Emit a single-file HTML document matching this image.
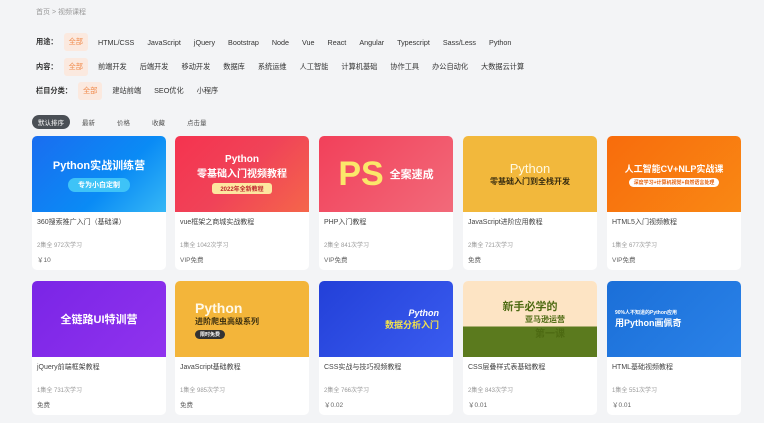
<!DOCTYPE html>
<html><head><meta charset="utf-8"><style>
*{margin:0;padding:0;box-sizing:border-box}
body{width:764px;height:423px;background:#f3f4f6;font-family:"Liberation Sans","Noto Sans CJK SC",sans-serif;color:#333;position:relative;overflow:hidden;font-size:8px}
.crumb{position:absolute;left:36px;top:7px;color:#999;font-size:7px}
.row{position:absolute;left:36px;display:flex;align-items:center;font-size:7.2px;color:#333}
.row b{font-weight:bold;margin-right:6px}
.row span{margin-right:13px}
.row .on{background:#fbe9df;color:#f08a4b;padding:4px 5px;border-radius:3px;margin-right:10px}
.sort{position:absolute;left:32px;top:115px;display:flex;align-items:center;font-size:6.5px;color:#555}
.sort span{margin-right:22px}
.sort .act{background:#4a4f55;color:#fff;padding:2px 6px;border-radius:7px;margin-right:12px}
.card{position:absolute;width:134px;height:134px;background:#fff;border-radius:5px;overflow:hidden}
.img{height:76px;position:relative;display:flex;flex-direction:column;align-items:center;justify-content:center;color:#fff;font-weight:bold;text-align:center}
.t{position:absolute;left:5px;top:81px;font-size:7px;color:#444}
.m{position:absolute;left:5px;top:104px;font-size:6px;color:#999}
.p{position:absolute;left:5px;top:118px;font-size:6.5px;color:#666}
</style></head><body>
<div class="crumb">首页 &gt; 视频课程</div>
<div class="row" style="top:33px"><b>用途：</b><span class="on">全部</span><span>HTML/CSS</span><span>JavaScript</span><span>jQuery</span><span>Bootstrap</span><span>Node</span><span>Vue</span><span>React</span><span>Angular</span><span>Typescript</span><span>Sass/Less</span><span>Python</span></div>
<div class="row" style="top:58px"><b>内容：</b><span class="on">全部</span><span>前端开发</span><span>后端开发</span><span>移动开发</span><span>数据库</span><span>系统运维</span><span>人工智能</span><span>计算机基础</span><span>协作工具</span><span>办公自动化</span><span>大数据云计算</span></div>
<div class="row" style="top:82px"><b>栏目分类：</b><span class="on">全部</span><span>建站前端</span><span>SEO优化</span><span>小程序</span></div>
<div class="sort"><span class="act">默认排序</span><span>最新</span><span>价格</span><span>收藏</span><span>点击量</span></div>

<div class="card" style="left:32px;top:136px"><div class="img" style="background:linear-gradient(135deg,#1a6df0,#0a8bf5 60%,#36b8f5)"><div style="font-size:11px">Python实战训练营</div><div style="margin-top:5px;background:#3ec3f7;border-radius:8px;padding:2px 10px;font-size:7px">专为小白定制</div></div><div class="t">360搜索推广入门（基础课）</div><div class="m">2集全 972次学习</div><div class="p">￥10</div></div>
<div class="card" style="left:175px;top:136px"><div class="img" style="background:linear-gradient(135deg,#f5334f,#f04358 50%,#f5664a)"><div style="font-size:10px">Python</div><div style="font-size:10px">零基础入门视频教程</div><div style="margin-top:3px;background:#fde7a0;color:#c0282f;border-radius:3px;padding:1px 8px;font-size:6px">2022年全新教程</div></div><div class="t">vue框架之商城实战教程</div><div class="m">1集全 1042次学习</div><div class="p">VIP免费</div></div>
<div class="card" style="left:319px;top:136px"><div class="img" style="background:linear-gradient(135deg,#f2405a,#f26a7a);flex-direction:row"><div style="font-size:34px;color:#fbe86a">PS</div><div style="font-size:11px;margin-left:6px">全案速成</div></div><div class="t">PHP入门教程</div><div class="m">2集全 841次学习</div><div class="p">VIP免费</div></div>
<div class="card" style="left:463px;top:136px"><div class="img" style="background:#f2b83c"><div style="font-size:13px;color:#fff8e0;font-weight:normal">Python</div><div style="font-size:8px;color:#3a2e10">零基础入门到全栈开发</div></div><div class="t">JavaScript进阶应用教程</div><div class="m">2集全 721次学习</div><div class="p">免费</div></div>
<div class="card" style="left:607px;top:136px"><div class="img" style="background:linear-gradient(135deg,#f86c0c,#f98814)"><div style="font-size:9px">人工智能CV+NLP实战课</div><div style="margin-top:3px;background:#fff;color:#e4600a;border-radius:6px;padding:1px 5px;font-size:5px">深度学习+计算机视觉+自然语言处理</div></div><div class="t">HTML5入门视频教程</div><div class="m">1集全 677次学习</div><div class="p">VIP免费</div></div>

<div class="card" style="left:32px;top:281px"><div class="img" style="background:linear-gradient(135deg,#7a25e6,#9033ee)"><div style="font-size:11px">全链路UI特训营</div></div><div class="t">jQuery前端框架教程</div><div class="m">1集全 731次学习</div><div class="p">免费</div></div>
<div class="card" style="left:175px;top:281px"><div class="img" style="background:#f3b53a;align-items:flex-start;padding-left:20px"><div style="font-size:14px;color:#fff8e6">Python</div><div style="font-size:8px;color:#3a2e10">进阶爬虫高级系列</div><div style="margin-top:3px;background:#333;border-radius:5px;padding:1px 5px;font-size:5px">限时免费</div></div><div class="t">JavaScript基础教程</div><div class="m">1集全 985次学习</div><div class="p">免费</div></div>
<div class="card" style="left:319px;top:281px"><div class="img" style="background:linear-gradient(135deg,#2340d8,#3a5cf0);align-items:flex-end;padding-right:14px"><div style="font-size:9px;font-style:italic">Python</div><div style="font-size:9px;color:#f3e24a">数据分析入门</div></div><div class="t">CSS实战与技巧视频教程</div><div class="m">2集全 766次学习</div><div class="p">￥0.02</div></div>
<div class="card" style="left:463px;top:281px"><div class="img" style="background:linear-gradient(180deg,#fde4c4 60%,#5b7a1e 60%)"><div style="font-size:11px;color:#4d6a12">新手必学的</div><div style="font-size:8px;color:#4d6a12;margin-left:30px">亚马逊运营</div><div style="font-size:10px;color:#4d6a12;margin-left:40px">第一课</div></div><div class="t">CSS层叠样式表基础教程</div><div class="m">2集全 843次学习</div><div class="p">￥0.01</div></div>
<div class="card" style="left:607px;top:281px"><div class="img" style="background:linear-gradient(135deg,#1b6fd8,#2a82e8);align-items:flex-start;padding-left:8px"><div style="font-size:5px">90%人不知道的Python应用</div><div style="font-size:9px">用Python画佩奇</div></div><div class="t">HTML基础视频教程</div><div class="m">1集全 551次学习</div><div class="p">￥0.01</div></div>
</body></html>
